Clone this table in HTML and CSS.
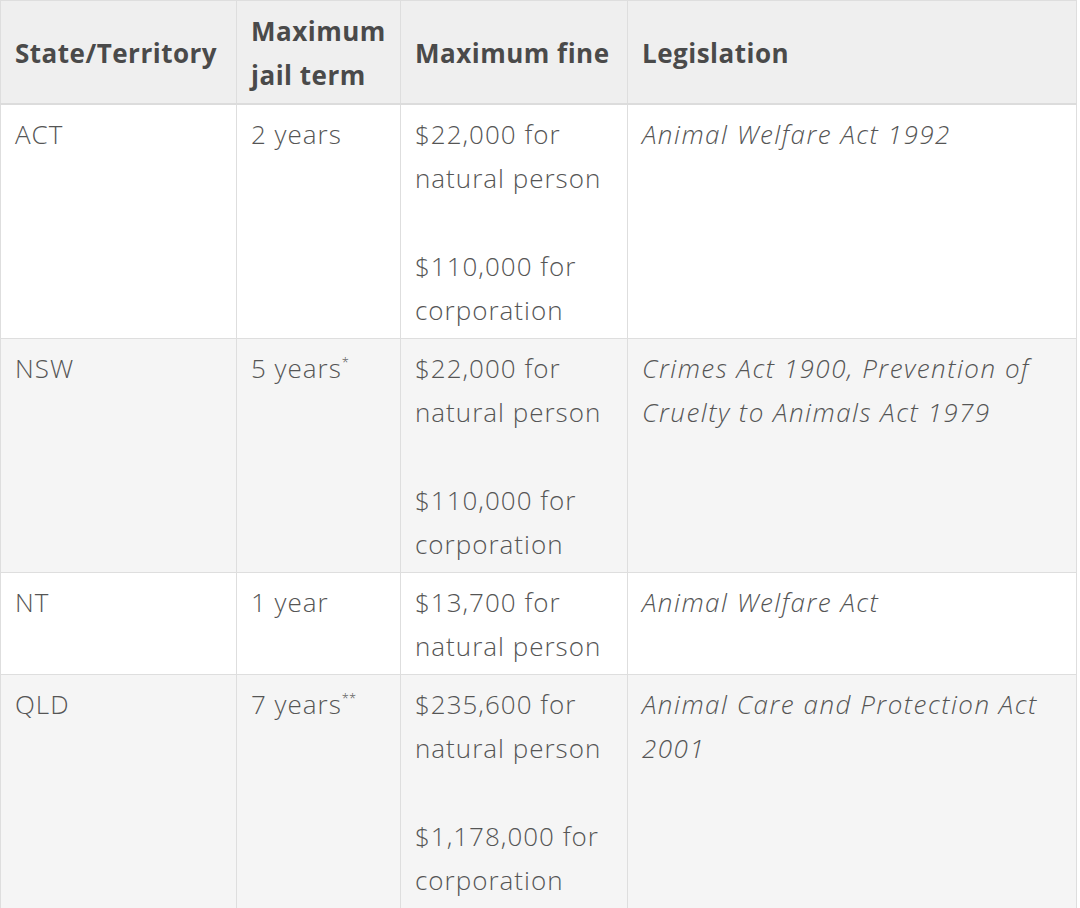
FILE: index.html
```html
<!DOCTYPE html>
<html>
<head>
<meta charset="utf-8">
<link rel="stylesheet" href="styles.css">
</head>
<body>
<table class="laws">
  <thead>
    <tr>
      <th class="c1">State/Territory</th>
      <th class="c2">Maximum jail term</th>
      <th class="c3">Maximum fine</th>
      <th class="c4">Legislation</th>
    </tr>
  </thead>
  <tbody>
    <tr>
      <td>ACT</td>
      <td>2 years</td>
      <td><p>$22,000 for natural person</p><p class="gap">$110,000 for corporation</p></td>
      <td><em>Animal Welfare Act 1992</em></td>
    </tr>
    <tr class="alt">
      <td>NSW</td>
      <td>5 years<sup>*</sup></td>
      <td><p>$22,000 for natural person</p><p class="gap">$110,000 for corporation</p></td>
      <td><em>Crimes Act 1900, Prevention of Cruelty to Animals Act 1979</em></td>
    </tr>
    <tr>
      <td>NT</td>
      <td>1 year</td>
      <td><p>$13,700 for natural person</p></td>
      <td><em>Animal Welfare Act</em></td>
    </tr>
    <tr class="alt">
      <td>QLD</td>
      <td>7 years<sup>**</sup></td>
      <td><p>$235,600 for natural person</p><p class="gap">$1,178,000 for corporation</p></td>
      <td><em>Animal Care and Protection Act 2001</em></td>
    </tr>
  </tbody>
</table>
</body>
</html>
```
FILE: styles.css
```css
html, body {
  margin: 0;
  padding: 0;
  background: #ffffff;
}

.laws {
  border-collapse: collapse;
  width: 1077px;
  table-layout: fixed;
  font-family: "Open Sans", "Lato", sans-serif;
  font-size: 26px;
  line-height: 44px;
  color: #555555;
}

.laws th,
.laws td {
  border: 1px solid #dedede;
  padding: 7px 10px 6px 14px;
  text-align: left;
}

.laws th {
  background: #efefef;
  color: #4a4a4a;
  font-weight: 700;
  letter-spacing: 0.5px;
  vertical-align: middle;
  border-bottom: 2px solid #dcdcdc;
  padding-top: 8px;
  padding-bottom: 6px;
}

.laws td {
  vertical-align: top;
  font-weight: 300;
  letter-spacing: 1px;
}

.c1 { width: 211px; }
.c2 { width: 139px; }
.c3 { width: 202px; }

.laws tr.alt td {
  background: #f5f5f5;
}

.laws p {
  margin: 0;
}

.laws p.gap {
  margin-top: 44px;
}

.laws em {
  font-style: italic;
  letter-spacing: 1.5px;
}

.laws sup {
  font-size: 13px;
  line-height: 0;
  vertical-align: 11px;
  letter-spacing: 0;
}
```
